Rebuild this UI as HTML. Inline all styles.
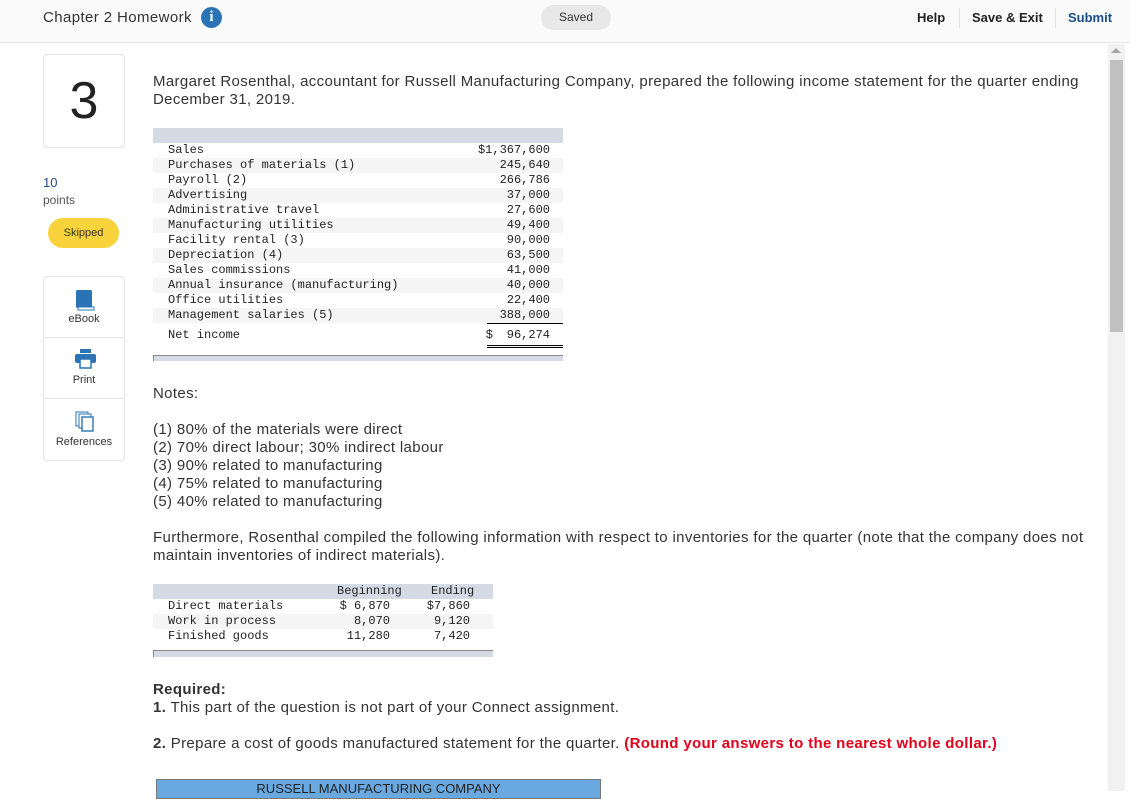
<!DOCTYPE html>
<html><head><meta charset="utf-8"><style>
*{margin:0;padding:0;box-sizing:border-box}
body{width:1130px;height:791px;overflow:hidden;background:#fff;font-family:"Liberation Sans",sans-serif;color:#333;position:relative}
.top{position:absolute;left:0;top:0;width:1130px;height:43px;background:#fafafa;border-bottom:1px solid #e6e6e6}
.a{position:absolute}
.mono{font-family:"Liberation Mono",monospace;font-size:12px;color:#222}
.t{position:absolute;left:153px;width:410px}
.t .r{height:15px;line-height:15px;position:relative;padding-left:15px}
.t .r.s{background:#f5f5f5}
.t .r span{position:absolute;right:13px}
.p{font-size:15px;line-height:18px;color:#333;letter-spacing:0.35px}
.side{position:absolute;left:43px;width:82px;border:1px solid #e3e3e3;border-radius:4px;background:#fff}
.side div{height:61px;border-bottom:1px solid #e3e3e3;text-align:center;font-size:11px;color:#333;position:relative}
.side div:last-child{border-bottom:none}
.side span{position:absolute;left:0;right:0;bottom:12px}
</style></head><body>
<div class="top">
<div class="a" style="left:43px;top:9px;font-size:15px;color:#333;letter-spacing:0.4px">Chapter 2 Homework</div>
<div class="a" style="left:201px;top:7px;width:21px;height:21px;border-radius:50%;background:#2a74b6;color:#fff;font:bold 15px 'Liberation Serif',serif;text-align:center;line-height:21px">i</div>
<div class="a" style="left:541px;top:5px;width:70px;height:25px;border-radius:13px;background:#e8e8e8;font-size:12px;text-align:center;line-height:25px;color:#333">Saved</div>
<div class="a" style="left:917px;top:10px;font-size:13px;font-weight:bold;color:#222">Help</div>
<div class="a" style="left:959px;top:8px;width:1px;height:20px;background:#e3e3e3"></div>
<div class="a" style="left:972px;top:10px;font-size:13px;font-weight:bold;color:#222">Save &amp; Exit</div>
<div class="a" style="left:1055px;top:8px;width:1px;height:20px;background:#e3e3e3"></div>
<div class="a" style="left:1068px;top:10px;font-size:13px;font-weight:bold;color:#1a4d85">Submit</div>
</div>
<div class="a" style="left:1108px;top:44px;width:17px;height:747px;background:#f1f1f1"></div>
<div class="a" style="left:1110px;top:60px;width:13px;height:272px;background:#c1c1c1"></div>
<div class="a" style="left:1111px;top:48px;width:0;height:0;border-left:5px solid transparent;border-right:5px solid transparent;border-bottom:5px solid #a3a3a3"></div>

<div class="a" style="left:43px;top:54px;width:82px;height:94px;border:1px solid #e3e3e3;border-radius:4px;text-align:center;font-size:52px;line-height:92px;color:#222">3</div>
<div class="a" style="left:43px;top:175px;font-size:13px;color:#1a4d85">10</div>
<div class="a" style="left:43px;top:193px;font-size:12px;color:#555">points</div>
<div class="a" style="left:48px;top:218px;width:71px;height:30px;border-radius:15px;background:#f8d33b;font-size:11px;text-align:center;line-height:30px;color:#333">Skipped</div>
<div class="side" style="top:276px">
<div><svg class="a" style="left:31px;top:12px" width="20" height="22"><rect x="1" y="1" width="16" height="18" rx="1.5" fill="#2a74b6"/><rect x="3" y="18" width="16" height="3" fill="#fff" stroke="#2a74b6"/></svg><span>eBook</span></div>
<div><svg class="a" style="left:31px;top:10px" width="21" height="22"><rect x="5" y="1" width="11" height="4" fill="#2a74b6"/><rect x="0" y="6" width="21" height="9" rx="2" fill="#2a74b6"/><rect x="5" y="11" width="11" height="9" fill="#fff" stroke="#2a74b6" stroke-width="1.5"/></svg><span>Print</span></div>
<div><svg class="a" style="left:31px;top:12px" width="20" height="22"><rect x="1" y="1" width="12" height="14" fill="#fff" stroke="#2a74b6"/><rect x="4" y="3" width="12" height="14" fill="#fff" stroke="#2a74b6"/><rect x="7" y="6" width="11" height="14" fill="#fff" stroke="#2a74b6" stroke-width="1.4"/></svg><span>References</span></div>
</div>

<div class="a p" style="left:153px;top:73px;width:950px">Margaret Rosenthal, accountant for Russell Manufacturing Company, prepared the following income statement for the quarter ending December 31, 2019.</div>

<div class="t mono" style="top:128px;height:240px">
<div style="height:15px;background:#d5dbe4"></div>
<div class="r">Sales<span>$1,367,600</span></div>
<div class="r s">Purchases of materials (1)<span>245,640</span></div>
<div class="r">Payroll (2)<span>266,786</span></div>
<div class="r s">Advertising<span>37,000</span></div>
<div class="r">Administrative travel<span>27,600</span></div>
<div class="r s">Manufacturing utilities<span>49,400</span></div>
<div class="r">Facility rental (3)<span>90,000</span></div>
<div class="r s">Depreciation (4)<span>63,500</span></div>
<div class="r">Sales commissions<span>41,000</span></div>
<div class="r s">Annual insurance (manufacturing)<span>40,000</span></div>
<div class="r">Office utilities<span>22,400</span></div>
<div class="r s">Management salaries (5)<span>388,000</span></div>
<div class="r" style="height:20px;line-height:20px;margin-top:2px">Net income<span style="right:13px">96,274</span><span style="right:70px">$</span></div>
<div style="position:absolute;left:334px;width:76px;top:195px;border-top:1px solid #000"></div>
<div style="position:absolute;left:334px;width:76px;top:217px;height:3px;border-top:1px solid #000;border-bottom:1px solid #000"></div>
<div style="position:absolute;left:0;width:410px;top:227px;height:6px;background:#d5dbe4;border-top:1px solid #888;border-left:1px solid #888"></div>
</div>

<div class="a p" style="left:153px;top:385px">Notes:</div>
<div class="a p" style="left:153px;top:421px">(1) 80% of the materials were direct<br>(2) 70% direct labour; 30% indirect labour<br>(3) 90% related to manufacturing<br>(4) 75% related to manufacturing<br>(5) 40% related to manufacturing</div>
<div class="a p" style="left:153px;top:529px;width:950px">Furthermore, Rosenthal compiled the following information with respect to inventories for the quarter (note that the company does not maintain inventories of indirect materials).</div>

<div class="t mono" style="top:584px;width:340px">
<div style="height:15px;background:#d5dbe4;position:relative"><span style="position:absolute;left:184px">Beginning</span><span style="position:absolute;left:278px">Ending</span></div>
<div class="r">Direct materials<span style="right:103px">$ 6,870</span><span style="right:23px">$7,860</span></div>
<div class="r s">Work in process<span style="right:103px">8,070</span><span style="right:23px">9,120</span></div>
<div class="r">Finished goods<span style="right:103px">11,280</span><span style="right:23px">7,420</span></div>
<div style="margin-top:6px;height:7px;background:#d5dbe4;border-top:1px solid #888;border-left:1px solid #888"></div>
</div>

<div class="a p" style="left:153px;top:681px"><b>Required:</b><br><b>1.</b> This part of the question is not part of your Connect assignment.</div>
<div class="a p" style="left:153px;top:735px"><b>2.</b> Prepare a cost of goods manufactured statement for the quarter. <b style="color:#e3001b">(Round your answers to the nearest whole dollar.)</b></div>
<div class="a" style="left:156px;top:779px;width:445px;height:20px;background:#6aa9df;border:1px solid #777;text-align:center;font-size:13px;line-height:18px;color:#222">RUSSELL MANUFACTURING COMPANY</div>
</body></html>
